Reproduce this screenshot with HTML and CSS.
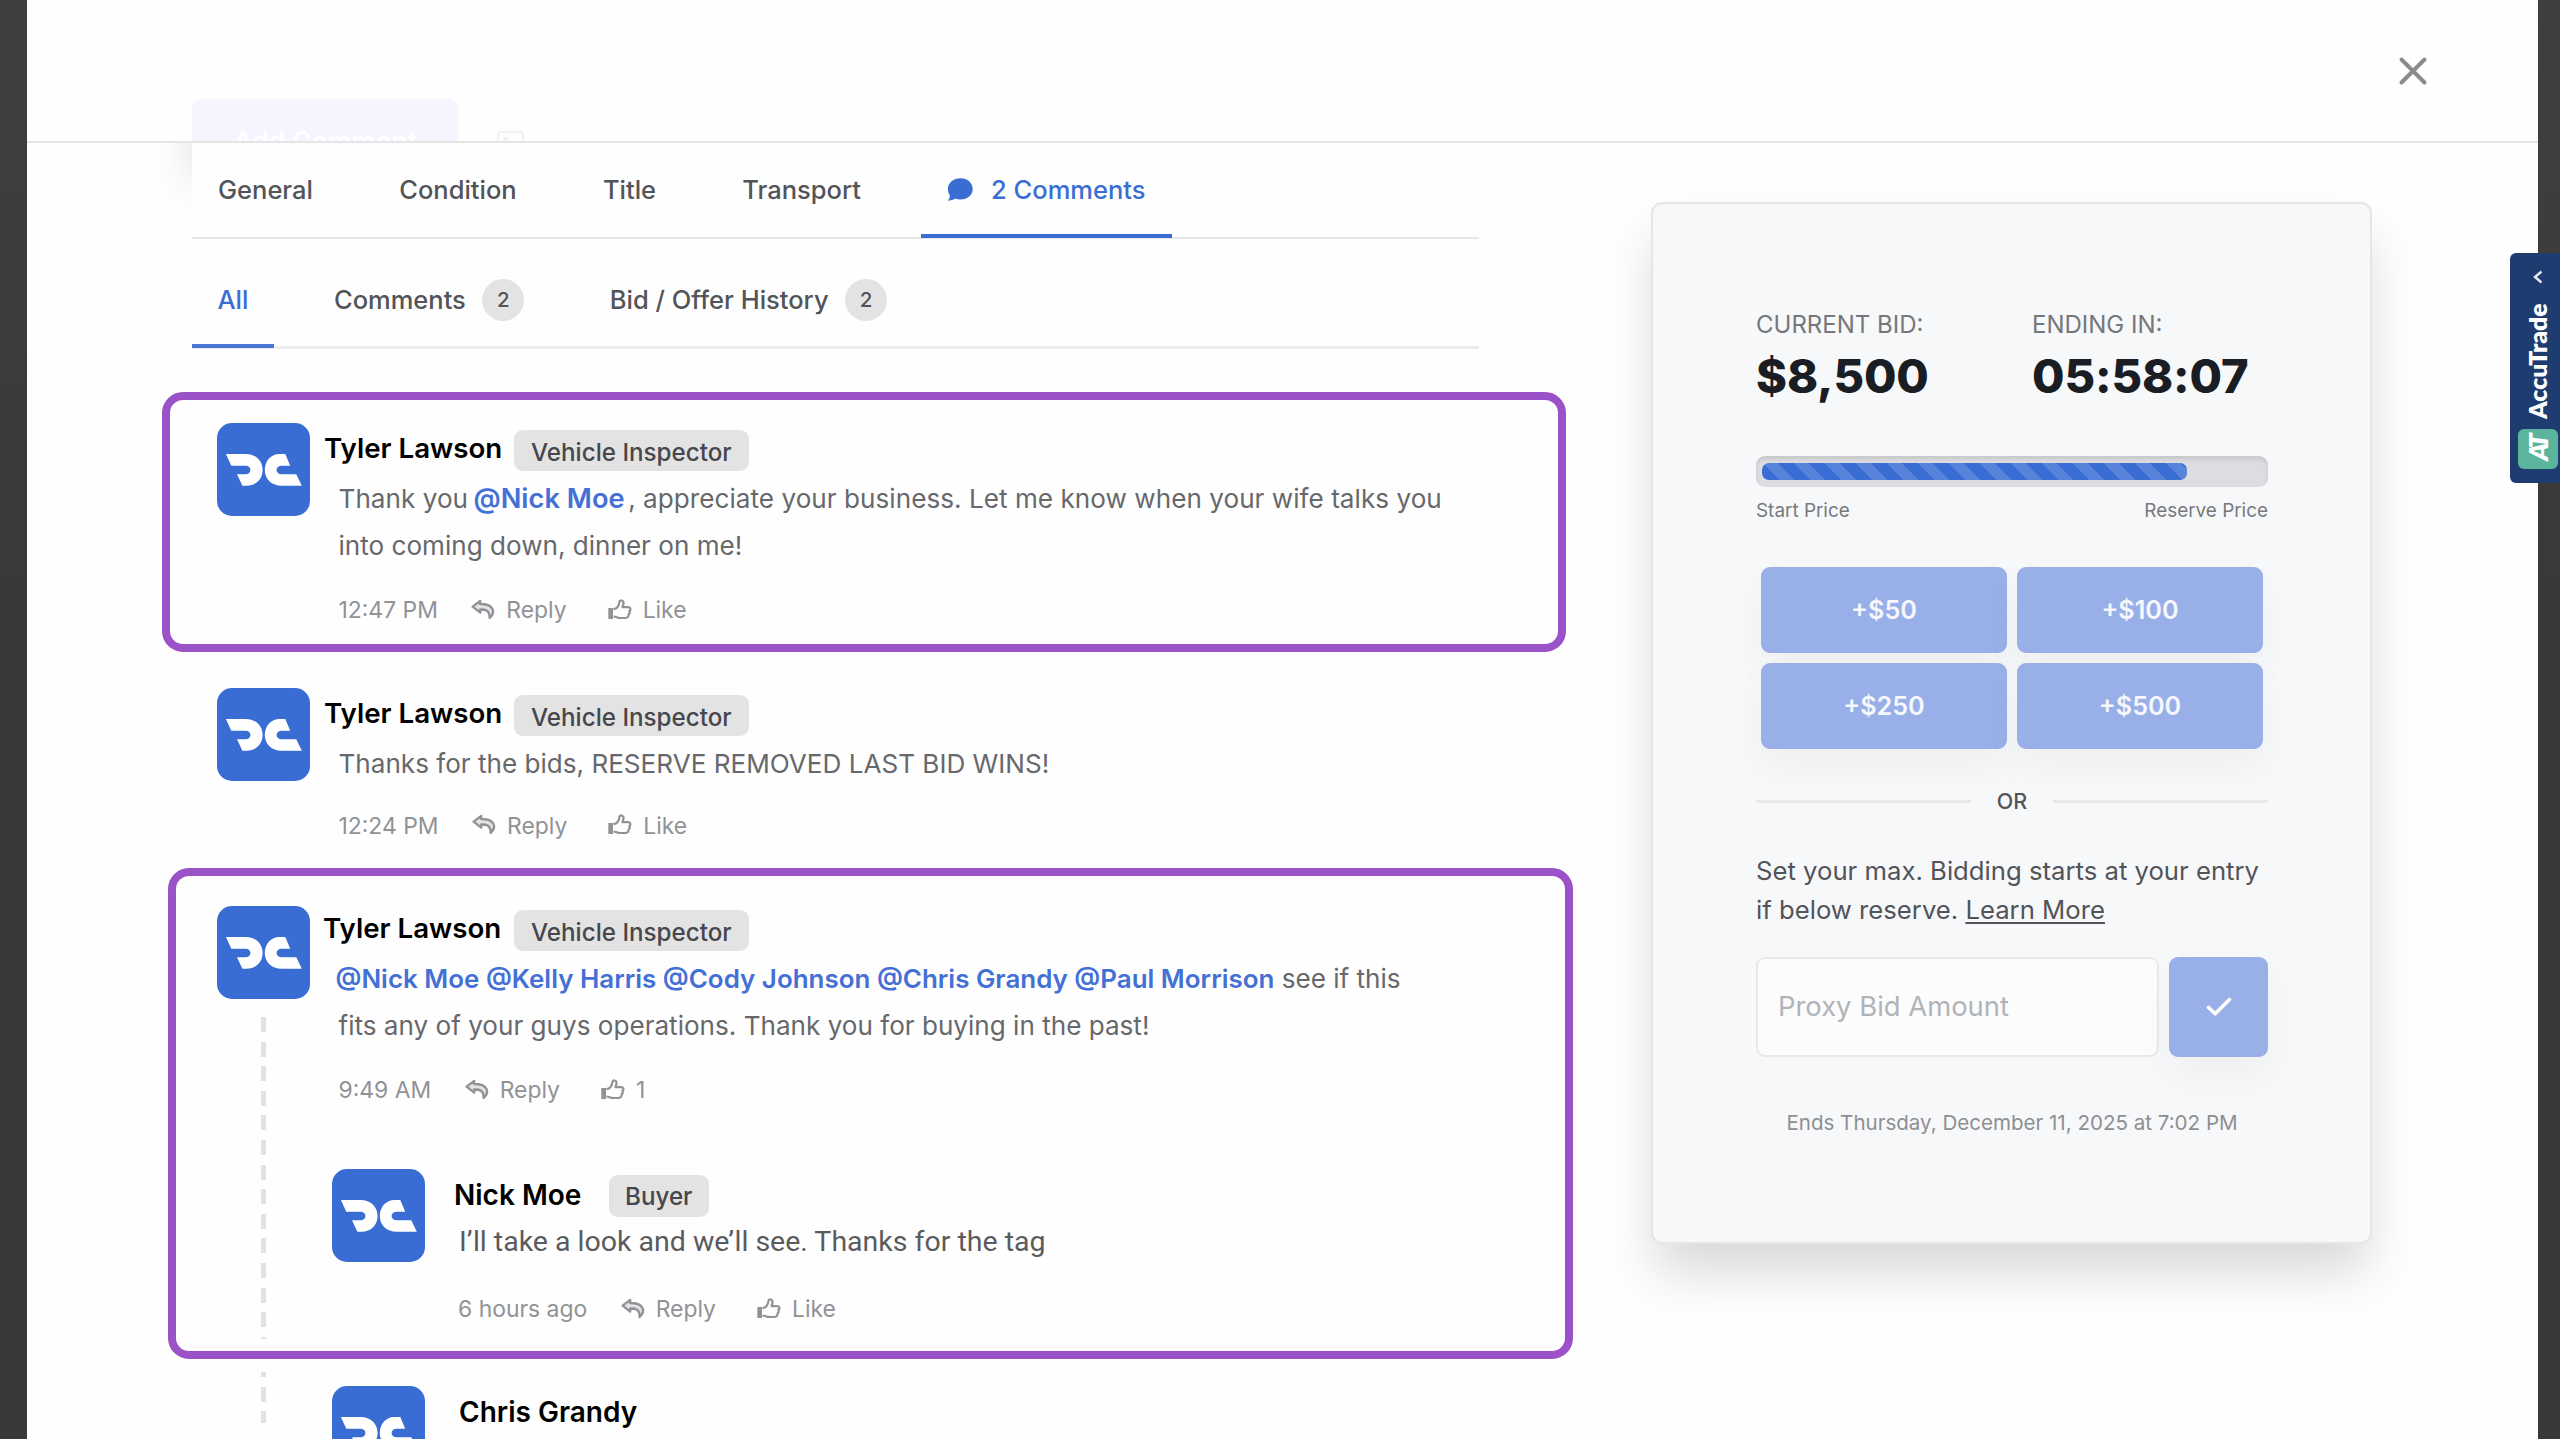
FILE: index.html
```
<!DOCTYPE html>
<html lang="en">
<head>
<meta charset="utf-8">
<title>Auction comments</title>
<link rel="stylesheet" href="styles.css">
</head>
<body>
<svg width="0" height="0" class="sprite" aria-hidden="true">
  <symbol id="logo" viewBox="0 0 93 93">
    <path d="M8.9 31H28.5C39 31 45.6 38 45.6 46.9C45.6 56 39 62.7 29.5 62.7H25.4L20 51.3H28.6C31.6 51.3 33.4 49.6 33.4 47C33.4 44.4 31.6 42.7 28.6 42.7H14.3ZM62.6 31H68.3L73.2 42.7H64.8C61.6 42.7 59.6 44.4 59.6 47C59.6 49.6 61.6 51.3 64.8 51.3H79.3L84.8 62.7H64.6C54.6 62.7 47.8 56 47.8 46.9C47.8 38 54 31 62.6 31Z" fill="#fff"/>
  </symbol>
  <symbol id="reply" viewBox="0 0 24 21">
    <path d="M9.200 1.800L1.600 7.700L9.200 13.600V10.500C14.500 10.300 18.800 11.200 18.600 19C25 13 22.600 5 9.200 5Z" fill="currentColor" fill-opacity=".25" stroke="currentColor" stroke-width="2.300" stroke-linejoin="round"/>
  </symbol>
  <symbol id="like" viewBox="0 0 24 21">
    <path d="M0.300 9H5V20H0.300Z" fill="currentColor"/>
    <path d="M5.500 10.200C8.600 9.600 11 7 11.500 2.800C11.700 1 15.600 0.600 15.500 4.200C15.500 6 14.600 7 14.500 8.100H20.200C23 8.300 23 11.300 21.300 12C22.300 13.600 21.500 14.800 20.600 15.300C20.900 17.600 19.500 19 17 19H12.500C9.600 19 8 17.700 5.500 17.500" fill="none" stroke="currentColor" stroke-width="2.200" stroke-linejoin="round"/>
  </symbol>
</svg>

<div class="modal">
  <header class="modal-head">
    <div class="ghost">
      <div class="ghost-box"></div>
      <div class="ghost-row">
        <span class="ghost-btn">Add Comment</span>
        <span class="ghost-check"><i></i></span>
      </div>
    </div>
    <button class="close" aria-label="Close">
      <svg viewBox="0 0 30 30"><path d="M3.500 3.500L26.500 26.500M26.500 3.500L3.500 26.500" stroke="#8a8c8f" stroke-width="4" stroke-linecap="round"/></svg>
    </button>
  </header>

  <div class="content">
    <main class="left">
      <nav class="tabs">
        <a>General</a>
        <a>Condition</a>
        <a>Title</a>
        <a>Transport</a>
        <a class="active">
          <svg class="bubble" viewBox="0 0 26 23"><path d="M13.500 0.300C20.500 0.300 25.700 5 25.700 11C25.700 17 20.500 21.500 13.500 21.500C11.600 21.500 9.900 21.200 8.300 20.600C6.300 22 3.600 22.700 0.800 22.700C2.200 21.200 3 19.400 2.800 17.300C1.500 15.500 0.900 13.300 0.900 11C0.900 5 6.500 0.300 13.500 0.300Z" fill="#3a6dd3"/></svg>
          2 Comments</a>
      </nav>
      <nav class="subtabs">
        <a class="active">All</a>
        <a>Comments <b>2</b></a>
        <a>Bid / Offer History <b>2</b></a>
      </nav>

      <section class="highlight first">
        <article class="comment">
          <div class="rail"><svg class="avatar"><use href="#logo"/></svg></div>
          <div class="body">
            <div class="who"><span class="name">Tyler Lawson</span><span class="role">Vehicle Inspector</span></div>
            <p>Thank you <span class="mention solo">@Nick Moe</span>, appreciate your business. Let me know when your wife talks you<br>into coming down, dinner on me!</p>
            <div class="meta"><time>12:47 PM</time><svg><use href="#reply"/></svg><span class="r">Reply</span><svg><use href="#like"/></svg><span>Like</span></div>
          </div>
        </article>
      </section>

      <article class="comment plain">
        <div class="rail"><svg class="avatar"><use href="#logo"/></svg></div>
        <div class="body">
          <div class="who"><span class="name">Tyler Lawson</span><span class="role">Vehicle Inspector</span></div>
          <p>Thanks for the bids, RESERVE REMOVED LAST BID WINS!</p>
          <div class="meta"><time>12:24 PM</time><svg><use href="#reply"/></svg><span class="r">Reply</span><svg><use href="#like"/></svg><span>Like</span></div>
        </div>
      </article>

      <section class="highlight second">
        <article class="comment threaded">
          <div class="rail"><svg class="avatar"><use href="#logo"/></svg><i class="dash"></i></div>
          <div class="body">
            <div class="who"><span class="name">Tyler Lawson</span><span class="role">Vehicle Inspector</span></div>
            <p><span class="mention">@Nick Moe @Kelly Harris @Cody Johnson @Chris Grandy @Paul Morrison</span> see if this<br>fits any of your guys operations. Thank you for buying in the past!</p>
            <div class="meta"><time>9:49 AM</time><svg><use href="#reply"/></svg><span class="r">Reply</span><svg><use href="#like"/></svg><span>1</span></div>
            <article class="comment reply">
              <div class="rail"><svg class="avatar"><use href="#logo"/></svg></div>
              <div class="body">
                <div class="who"><span class="name">Nick Moe</span><span class="role">Buyer</span></div>
                <p>I’ll take a look and we’ll see. Thanks for the tag</p>
                <div class="meta"><time>6 hours ago</time><svg><use href="#reply"/></svg><span class="r">Reply</span><svg><use href="#like"/></svg><span>Like</span></div>
              </div>
            </article>
          </div>
        </article>
      </section>

      <div class="more">
        <div class="rail"><i class="dash rest"></i></div>
        <article class="comment reply last">
          <div class="rail"><svg class="avatar"><use href="#logo"/></svg></div>
          <div class="body"><div class="who"><span class="name">Chris Grandy</span></div></div>
        </article>
      </div>
    </main>

    <aside class="card">
      <div class="stats">
        <div><label>CURRENT BID:</label><strong>$8,500</strong></div>
        <div><label>ENDING IN:</label><strong>05:58:07</strong></div>
      </div>
      <div class="track"><div class="fill"></div></div>
      <div class="range"><span>Start Price</span><span>Reserve Price</span></div>
      <div class="bids"><button>+$50</button><button>+$100</button><button>+$250</button><button>+$500</button></div>
      <div class="or">OR</div>
      <p class="hint">Set your max. Bidding starts at your entry<br>if below reserve. <a>Learn More</a></p>
      <div class="proxy">
        <div class="input">Proxy Bid Amount</div>
        <button aria-label="Submit"><svg viewBox="0 0 26 20"><path d="M2.500 10.500L9.200 16.800L23.500 2.500" fill="none" stroke="#fff" stroke-width="3.600" stroke-linecap="round" stroke-linejoin="round"/></svg></button>
      </div>
      <div class="ends">Ends Thursday, December 11, 2025 at 7:02 PM</div>
    </aside>
  </div>
</div>

<div class="side-tab">
  <svg viewBox="0 0 10 14"><path d="M8.500 1.500L2 7L8.500 12.500" fill="none" stroke="#e4e9f1" stroke-width="2.400"/></svg>
  <span class="side-name">AccuTrade</span>
  <span class="side-logo">AT</span>
</div>
</body>
</html>
```
FILE: styles.css
```
* { box-sizing: border-box; }
body {
  margin: 0;
  height: 1439px;
  overflow: hidden;
  padding: 0 22px 0 27px;
  background: linear-gradient(#3f3f3f, #393939 40%, #393939);
  font-family: Inter, "Liberation Sans", sans-serif;
  color: #525459;
}
button { border: 0; padding: 0; font: inherit; }
.sprite { position: absolute; }

.modal { height: 1439px; overflow: hidden; background: #fefefe; }

/* header with the faded content scrolled beneath it */
.modal-head {
  display: flex;
  justify-content: space-between;
  height: 143px;
  border-bottom: 2px solid #e5e5e6;
  padding-left: 165px;
  overflow: hidden;
}
.ghost-box { width: 1287px; height: 69px; background: #fdfdfd; border-radius: 0 0 8px 8px; }
.ghost-row { display: flex; align-items: flex-start; gap: 39px; padding-top: 30px; }
.ghost-btn {
  width: 266px;
  height: 80px;
  border-radius: 9px;
  background: #f5f5ff;
  color: #fff;
  font-size: 26.500px;
  font-weight: 600;
  line-height: 84px;
  text-align: center;
}
.ghost-check { width: 27px; height: 27px; margin-top: 32px; padding: 4px; border: 2px solid #f1f1f2; border-radius: 4px; }
.ghost-check i { display: block; width: 5px; height: 5px; border-radius: 50%; background: #f1f1f2; }
.close { width: 30px; height: 30px; margin: 56px 110px 0 0; background: none; }
.close svg { display: block; width: 30px; height: 30px; }

.content { display: flex; align-items: flex-start; padding-left: 165px; }
.left { width: 1287px; flex: none; }

.tabs, .subtabs { display: flex; font-weight: 500; font-size: 25.500px; white-space: nowrap; }
.tabs {
  height: 96px;
  gap: 34.200px;
  border-bottom: 2px solid #e6e6e7;
  box-shadow: -8px -50px 45px -8px rgba(0, 0, 0, .12);
  background: #fefefe;
  clip-path: inset(0 0 0 -70px);
}
.tabs a { display: flex; align-items: center; padding: 0 26px; height: 93px; }
.tabs .active { color: #3a6dd3; height: 95px; border-bottom: 4px solid #3a6dd3; padding-top: 2px; }
.bubble { width: 26px; height: 23px; margin-right: 18px; }
.subtabs { height: 110px; gap: 34.500px; border-bottom: 3px solid #ececec; padding-top: 10px; }
.subtabs a { display: flex; align-items: center; height: 99px; padding: 1px 25.500px 0; }
.subtabs .active { color: #3a6dd3; border-bottom: 4px solid #4a76d8; padding-top: 5px; }
.subtabs b {
  width: 42px;
  height: 42px;
  margin: 1px 0 0 16.500px;
  border-radius: 50%;
  background: #e3e3e3;
  font-size: 20.500px;
  font-weight: 500;
  line-height: 42px;
  text-align: center;
}

.highlight { border: 8px solid #9b51c8; border-radius: 21px; width: 1404px; }
.first { margin: 43px 0 0 -30px; height: 260px; padding: 23px 0 0 47px; }
.second { margin-left: -24px; height: 491px; width: 1405px; padding: 30px 0 0 41px; }

.comment { display: flex; align-items: flex-start; }
.plain { margin: 36px 0 0 25px; height: 180px; }
.rail { width: 93px; flex: none; display: flex; flex-direction: column; align-items: center; }
.avatar { width: 93px; height: 93px; border-radius: 15px; background: #3a6dd3; display: block; }
.dash {
  width: 5px;
  height: 322px;
  margin: 18px 0 0;
  background: repeating-linear-gradient(#e2e2e2 0 15px, transparent 15px 24.600px);
}
.body { padding-left: 14px; white-space: nowrap; }
.who { display: flex; align-items: flex-end; height: 48px; }
.name { font-size: 27.700px; font-weight: 600; line-height: 45px; color: #000; width: 190px; }
.role {
  height: 41px;
  padding: 0 17.500px 0 17px;
  border-radius: 9px;
  background: #e3e3e3;
  color: #46474c;
  font-size: 24.200px;
  font-weight: 500;
  line-height: 46px;
}
.body p { margin: 5px 0 0 14.500px; font-size: 26.100px; line-height: 46.500px; color: #67686c; }
.mention { color: #4470d6; font-weight: 600; font-size: 25.950px; margin-left: -3px; line-height: 1; }
.solo { margin: 0 3.500px 0 -2px; font-size: 27.200px; }
.first p::first-line { letter-spacing: .04px; }
.meta {
  display: flex;
  align-items: center;
  height: 30px;
  margin: 26px 0 0 14.500px;
  font-size: 22.900px;
  color: #919296;
}
.meta svg { width: 24px; height: 21px; margin: -2px 11px 0 0; }
.meta time { margin-right: 33.500px; }
.meta .r { margin-right: 41px; }
.plain .meta { margin-top: 23px; }
.threaded > .body { margin-top: -3px; }
.threaded > .body > .who .name { margin-left: -1px; width: 191px; }

.reply { margin: 64px 0 0 8px; }
.reply > .body { padding-left: 29px; }
.reply .name { line-height: 44px; width: 155px; font-size: 28px; }
.reply .role { padding: 0 17px 0 16px; line-height: 44px; height: 42px; }
.reply p { margin: 5px 0 0 5px; font-family: Roboto, sans-serif; font-size: 28.500px; line-height: 40px; color: #5a5b5d; }
.reply .meta { margin: 32px 0 0 4px; }

.more { display: flex; padding-left: 25px; }
.rest { height: 51px; margin-top: 13px; background: repeating-linear-gradient(#e2e2e2 0 5px, transparent 5px 14.600px, #e2e2e2 14.600px 24.600px); }
.last { margin: 27px 0 0 22px; }
.last > .body { padding-left: 34px; }

.card {
  width: 721px;
  height: 1042px;
  margin: 59px 0 0 172px;
  padding: 101px 102px 0 103px;
  border: 2px solid #e4e6e7;
  border-radius: 11px;
  background: #f7f8fa;
  box-shadow: 0 32px 50px -4px rgba(0, 0, 0, .15);
}
.stats { display: grid; grid-template-columns: 276px 1fr; }
.stats label { display: block; font-size: 24px; line-height: 40px; color: #75777b; }
.stats strong { display: block; font-size: 47px; letter-spacing: -.1px; line-height: 62px; color: #1a1d24; font-weight: 800; white-space: nowrap; }
.track {
  height: 31px;
  margin-top: 49px;
  padding: 7px 6px;
  border-radius: 9px;
  background: #dcdde0;
  box-shadow: inset 0 3px 4px rgba(0, 0, 0, .1);
}
.fill {
  width: 425px;
  height: 17px;
  border-radius: 7px;
  background: #3a6dd3 linear-gradient(45deg, rgba(255, 255, 255, .15) 25%, transparent 25% 50%, rgba(255, 255, 255, .15) 50% 75%, transparent 75%) 0 0 / 31px 31px;
}
.range { display: flex; justify-content: space-between; margin-top: 8px; font-size: 18.900px; line-height: 31px; color: #77797d; }
.bids { display: grid; grid-template-columns: 246px 246px; gap: 10px; padding: 41px 5px 0; }
.bids button, .proxy button {
  height: 86px;
  border-radius: 9px;
  background: #98b0e7;
  color: #f5f7fd;
  font-size: 25.200px;
  font-weight: 600;
  line-height: 85px;
  box-shadow: 0 18px 40px rgba(0, 0, 0, .04);
}
.or { display: flex; align-items: center; justify-content: space-between; margin-top: 35px; font-size: 21.500px; font-weight: 500; line-height: 34px; }
.or::before, .or::after { content: ""; width: 215px; height: 3px; background: #e7e8ea; }
.hint { margin: 34px 0 0; font-size: 25.700px; line-height: 38.800px; white-space: nowrap; }
.hint a { text-decoration: underline; text-underline-offset: 3px; text-decoration-thickness: 2px; }
.proxy { display: flex; justify-content: space-between; margin-top: 27px; }
.input {
  width: 403px;
  height: 100px;
  padding-left: 20px;
  border: 2px solid #e8e9eb;
  border-radius: 9px;
  background: #fcfcfd;
  color: #b0b3b8;
  font-size: 27.400px;
  line-height: 95px;
}
.proxy button { width: 99px; height: 100px; display: flex; align-items: center; justify-content: center; }
.proxy svg { width: 26px; height: 20px; }
.ends { margin-top: 50px; font-size: 20.550px; line-height: 32px; text-align: center; color: #8d8f93; white-space: nowrap; }

/* docked tab that overlaps the modal edge */
.side-tab {
  position: absolute;
  right: 0;
  top: 253px;
  width: 50px;
  height: 230px;
  padding: 17px 2px 0 8px;
  border-radius: 6px 0 0 6px;
  background: #1e3c6f;
  display: flex;
  flex-direction: column;
  align-items: center;
}
.side-tab svg { width: 10px; height: 14px; }
.side-name {
  height: 114px;
  margin: 21px 0 10px;
  writing-mode: vertical-rl;
  transform: rotate(180deg);
  font: 800 24.800px/30px Lato, sans-serif;
  color: #fff;
}
.side-logo {
  width: 40px;
  height: 40px;
  border-radius: 6px;
  background: #5bb59c;
  color: #fff;
  font: italic 800 27px/40px Lato, sans-serif;
  letter-spacing: -4px;
  text-align: center;
  transform: rotate(-90deg);
}
```
